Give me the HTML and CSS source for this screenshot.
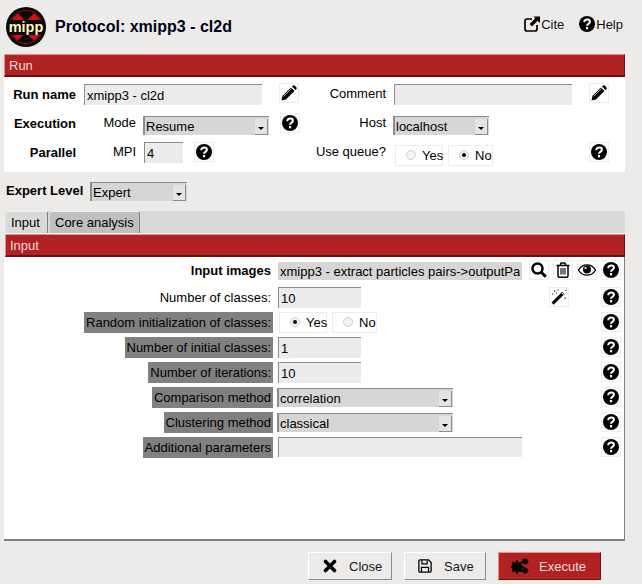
FILE: index.html
```html
<!DOCTYPE html>
<html lang="en">
<head>
<meta charset="UTF-8">
<meta name="viewport" content="width=device-width, initial-scale=1.0">
<title>Protocol: xmipp3 - cl2d</title>
<link rel="stylesheet" href="styles.css">
</head>
<body>
<svg class="defs" width="0" height="0">
  <symbol id="i-help" viewBox="0 0 16 16">
    <circle cx="8" cy="8" r="8" fill="#000"/>
    <path d="M5.2 6.2c0-1.7 1.3-2.7 2.9-2.7s2.8 1 2.8 2.3c0 2-2.9 2-2.9 3.9" fill="none" stroke="#fff" stroke-width="2"/>
    <rect x="7" y="11" width="2.1" height="2.3" fill="#fff"/>
  </symbol>
  <symbol id="i-pencil" viewBox="0 0 16 16">
    <path d="M0.5 15.5l.9-4.4L10 2.5l3.5 3.5-8.6 8.6z"/>
    <path d="M11 1.5l.8-.8c.6-.6 1.4-.6 2 0l1.5 1.5c.6.6.6 1.4 0 2l-.8.8z"/>
    <path d="M2.5 11.5l8-8" stroke="#fff" stroke-width=".7"/>
  </symbol>
  <symbol id="i-search" viewBox="0 0 16 16">
    <circle cx="6.5" cy="6.5" r="5" fill="none" stroke="#000" stroke-width="2.5"/>
    <path d="M10.2 10.2l4.6 4.6" stroke="#000" stroke-width="3"/>
  </symbol>
  <symbol id="i-trash" viewBox="0 0 16 16">
    <path d="M1.5 3.5h13M5.5 3.5V2c0-.6.4-1 1-1h3c.6 0 1 .4 1 1v1.5M3 3.5v10.2c0 .9.5 1.5 1.3 1.5h7.4c.8 0 1.3-.6 1.3-1.5V3.5" fill="none" stroke="#000" stroke-width="1.5"/>
    <path d="M6 6v6.5M8 6v6.5M10 6v6.5" stroke="#000" stroke-width="1.1"/>
  </symbol>
  <symbol id="i-eye" viewBox="0 0 18 12">
    <path d="M.5 6C2.5 2.6 5.5.8 9 .8s6.500 1.800 8.500 5.200C15.500 9.400 12.500 11.200 9 11.200S2.500 9.400.5 6z" fill="none" stroke="#000" stroke-width="1.300"/>
    <circle cx="9" cy="5.500" r="4"/>
    <circle cx="7.500" cy="4" r="1.100" fill="#fff"/>
  </symbol>
  <symbol id="i-wand" viewBox="0 0 16 16">
    <path d="M.5 13.500L11 3l2.200 2.200L2.700 15.700z"/>
    <path d="M10 4l1-1 2.200 2.200-1 1z" fill="#fff" stroke="#000" stroke-width=".6"/>
    <path d="M3 1.500h1.200v1.200H3zM6.500.5h1v1h-1zM1 4.500h1v1H1zM13.500 8.500h1.200v1.200h-1.200zM5 3.500h1v1H5zM14.500 1h1v1h-1z"/>
  </symbol>
  <symbol id="i-times" viewBox="0 0 14 14">
    <path d="M2.500 2.500l9 9M11.500 2.500l-9 9" stroke="#000" stroke-width="3.600" stroke-linecap="round"/>
  </symbol>
  <symbol id="i-save" viewBox="0 0 16 16">
    <path d="M1 2.200C1 1.500 1.500 1 2.200 1h9.800L15 4v9.800c0 .7-.5 1.200-1.200 1.200H2.200C1.500 15 1 14.500 1 13.800z" fill="none" stroke="#000" stroke-width="1.500"/>
    <path d="M4.500 1.500v4h6v-4M4 15V9.500h8V15" fill="none" stroke="#000" stroke-width="1.400"/>
  </symbol>
  <symbol id="i-gears" viewBox="0 0 18 16">
    <circle cx="6" cy="9" r="3.700" fill="none" stroke="#000" stroke-width="3"/>
    <path d="M6 2.500v13M-.5 9h13M1.400 4.400l9.200 9.200M10.600 4.400l-9.200 9.200" stroke="#000" stroke-width="2"/>
    <circle cx="14" cy="3.500" r="1.800" fill="none" stroke="#000" stroke-width="1.600"/>
    <path d="M14 0v7M10.500 3.500h7M11.700 1.200l4.600 4.600M16.300 1.200l-4.600 4.600" stroke="#000" stroke-width="1.100"/>
    <circle cx="14" cy="12.500" r="1.800" fill="none" stroke="#000" stroke-width="1.600"/>
    <path d="M14 9v7M10.500 12.500h7M11.700 10.200l4.600 4.600M16.300 10.200l-4.600 4.600" stroke="#000" stroke-width="1.100"/>
  </symbol>
  <symbol id="i-link" viewBox="0 0 16 16">
    <path d="M8 3H3C1.900 3 1 3.900 1 5v8c0 1.100.9 2 2 2h8c1.100 0 2-.9 2-2V9" fill="none" stroke="#000" stroke-width="1.700"/>
    <path d="M9.500 0.500H16V7l-2.300-2.300L8 10.400 5.600 8l5.700-5.700z"/>
  </symbol>
</svg>

<header class="top">
  <svg class="logo" viewBox="0 0 40 40" width="40" height="40">
    <circle cx="20" cy="20" r="20" fill="#0a0a0a"/>
    <path d="M9 9L31 31M31 9L9 31" stroke="#d40f14" stroke-width="8"/>
    <circle cx="20" cy="20" r="16.500" fill="none" stroke="#8a0b0e" stroke-width="1"/>
    <rect x="2" y="13" width="36" height="15" rx="6" fill="#0a0a0a"/>
    <text x="20" y="25" text-anchor="middle" class="logo-text">mipp</text>
  </svg>
  <h1 class="title">Protocol: xmipp3 - cl2d</h1>
  <a class="top-link cite"><svg class="ico-16"><use href="#i-link"/></svg>Cite</a>
  <a class="top-link help"><svg class="ico-16"><use href="#i-help"/></svg>Help</a>
</header>

<section class="section">
  <div class="section-head">Run</div>
  <div class="run-body">
    <div class="run-row">
      <div class="half">
        <label class="lbl-main">Run name</label>
        <input class="entry entry-run" type="text" value="xmipp3 - cl2d">
        <button class="ibtn ibtn-after"><svg class="ico"><use href="#i-pencil"/></svg></button>
      </div>
      <div class="half half-right">
        <label class="lbl-right">Comment</label>
        <input class="entry entry-run" type="text">
        <button class="ibtn ibtn-after"><svg class="ico"><use href="#i-pencil"/></svg></button>
      </div>
    </div>
    <div class="run-row">
      <div class="half">
        <label class="lbl-main">Execution</label>
        <label class="lbl-sub">Mode</label>
        <div class="combo combo-mode"><span class="combo-text">Resume</span><span class="combo-btn"></span></div>
        <button class="ibtn ibtn-near"><svg class="ico"><use href="#i-help"/></svg></button>
      </div>
      <div class="half half-right">
        <label class="lbl-right">Host</label>
        <div class="combo combo-host"><span class="combo-text">localhost</span><span class="combo-btn"></span></div>
      </div>
    </div>
    <div class="run-row">
      <div class="half">
        <label class="lbl-main">Parallel</label>
        <label class="lbl-sub">MPI</label>
        <input class="entry entry-mpi" type="text" value="4">
        <button class="ibtn ibtn-near"><svg class="ico"><use href="#i-help"/></svg></button>
      </div>
      <div class="half half-right">
        <label class="lbl-right">Use queue?</label>
        <div class="radios radios-queue">
          <span class="radio radio-yes"><i class="dot"></i>Yes</span>
          <span class="radio radio-no"><i class="dot on"></i>No</span>
        </div>
        <button class="ibtn ibtn-end"><svg class="ico"><use href="#i-help"/></svg></button>
      </div>
    </div>
  </div>
</section>

<div class="expert">
  <label class="expert-label">Expert Level</label>
  <div class="combo combo-expert"><span class="combo-text">Expert</span><span class="combo-btn"></span></div>
</div>

<div class="tabs">
  <span class="tab tab-on">Input</span>
  <span class="tab">Core analysis</span>
</div>

<section class="section section-input">
  <div class="section-head">Input</div>
  <div class="form-body">
    <div class="form-row form-row-first">
      <label class="form-label"><span class="form-text strong">Input images</span></label>
      <input class="entry entry-path" type="text" value="xmipp3 - extract particles pairs-&gt;outputParticles">
      <div class="actions">
        <button class="ibtn"><svg class="ico"><use href="#i-search"/></svg></button>
        <button class="ibtn"><svg class="ico"><use href="#i-trash"/></svg></button>
        <button class="ibtn"><svg class="ico-wide"><use href="#i-eye"/></svg></button>
        <button class="ibtn"><svg class="ico"><use href="#i-help"/></svg></button>
      </div>
    </div>
    <div class="form-row">
      <label class="form-label"><span class="form-text">Number of classes:</span></label>
      <input class="entry entry-num" type="text" value="10">
      <div class="actions">
        <button class="ibtn"><svg class="ico"><use href="#i-wand"/></svg></button>
        <span class="ibtn-gap"></span>
        <button class="ibtn"><svg class="ico"><use href="#i-help"/></svg></button>
      </div>
    </div>
    <div class="form-row">
      <label class="form-label"><span class="form-text expert-only">Random initialization of classes:</span></label>
      <div class="radios radios-form">
        <span class="radio radio-fyes"><i class="dot on"></i>Yes</span>
        <span class="radio radio-fno"><i class="dot"></i>No</span>
      </div>
      <div class="actions"><button class="ibtn"><svg class="ico"><use href="#i-help"/></svg></button></div>
    </div>
    <div class="form-row">
      <label class="form-label"><span class="form-text expert-only">Number of initial classes:</span></label>
      <input class="entry entry-num" type="text" value="1">
      <div class="actions"><button class="ibtn"><svg class="ico"><use href="#i-help"/></svg></button></div>
    </div>
    <div class="form-row">
      <label class="form-label"><span class="form-text expert-only">Number of iterations:</span></label>
      <input class="entry entry-num" type="text" value="10">
      <div class="actions"><button class="ibtn"><svg class="ico"><use href="#i-help"/></svg></button></div>
    </div>
    <div class="form-row">
      <label class="form-label"><span class="form-text expert-only">Comparison method</span></label>
      <div class="combo combo-form"><span class="combo-text">correlation</span><span class="combo-btn"></span></div>
      <div class="actions"><button class="ibtn"><svg class="ico"><use href="#i-help"/></svg></button></div>
    </div>
    <div class="form-row">
      <label class="form-label"><span class="form-text expert-only">Clustering method</span></label>
      <div class="combo combo-form"><span class="combo-text">classical</span><span class="combo-btn"></span></div>
      <div class="actions"><button class="ibtn"><svg class="ico"><use href="#i-help"/></svg></button></div>
    </div>
    <div class="form-row">
      <label class="form-label"><span class="form-text expert-only">Additional parameters</span></label>
      <input class="entry entry-path entry-blank" type="text">
      <div class="actions"><button class="ibtn"><svg class="ico"><use href="#i-help"/></svg></button></div>
    </div>
  </div>
</section>

<footer class="bottom">
  <button class="btn btn-close"><svg class="btn-ico"><use href="#i-times"/></svg>Close</button>
  <button class="btn btn-save"><svg class="btn-ico"><use href="#i-save"/></svg>Save</button>
  <button class="btn btn-run"><svg class="btn-ico-wide"><use href="#i-gears"/></svg>Execute</button>
</footer>
</body>
</html>
```

FILE: styles.css
```css
* {
  box-sizing: border-box;
}
body {
  margin: 0;
  width: 642px;
  height: 584px;
  overflow: hidden;
  background-color: #ecebe9;
  color: #000;
  font-family: "Liberation Sans", Arial, sans-serif;
  font-size: 13px;
}
.defs {
  display: block;
  height: 0;
}

/* header */
.top {
  display: flex;
  align-items: center;
  height: 54px;
  padding: 0 19px 0 6px;
}
.logo {
  flex: none;
  margin-top: -1px;
}
.logo-text {
  font-family: "Liberation Sans", sans-serif;
  font-weight: bold;
  font-size: 14.5px;
  fill: #fdfdb8;
}
.title {
  margin: 0 0 1px 9px;
  font-size: 16px;
  font-weight: bold;
  color: #00001a;
}
.top-link {
  display: flex;
  align-items: center;
  margin-bottom: 6px;
  color: #111;
}
.cite {
  margin-left: auto;
}
.help {
  margin-left: 15px;
}
.ico-16 {
  width: 16px;
  height: 16px;
  margin-right: 1px;
}

/* sections */
.section {
  margin-left: 4px;
  width: 621px;
}
.section-head {
  height: 23px;
  padding: 2px 4px 0;
  background-color: #b22222;
  border-top: 1px solid #f08c8c;
  border-left: 1px solid #f08c8c;
  border-right: 1px solid #6d1010;
  border-bottom: 2px solid #6d1010;
  color: #f6dede;
  line-height: 17px;
}
.run-body {
  height: 95px;
  padding-top: 3px;
  background-color: #fff;
}
.run-row {
  display: flex;
  height: 29px;
}
.half {
  display: flex;
  align-items: center;
  width: 310px;
}
.half-right {
  flex: 1;
  width: auto;
}
.lbl-main {
  width: 72px;
  text-align: right;
  font-weight: bold;
}
.lbl-sub,
.lbl-right {
  text-align: right;
  margin-top: -2px;
}
.lbl-sub {
  width: 60px;
}
.lbl-right {
  width: 72px;
}

/* fields */
.entry {
  height: 21px;
  padding: 0 2px;
  border: 0;
  border-top: 1px solid #8c8c8c;
  border-left: 1px solid #8c8c8c;
  border-radius: 0;
  background-color: #ecebe9;
  color: #000;
  font-family: inherit;
  font-size: 13px;
  outline: none;
}
.entry-run {
  width: 178px;
  margin-left: 8px;
}
.entry-mpi {
  width: 39px;
  margin-left: 8px;
}
.entry-num {
  width: 83px;
}
.entry-path {
  width: 244px;
  margin-top: 2px;
  height: 18px;
  background-color: #d6d6d6;
  border-top: 0;
  border-left: 0;
}
.entry-blank {
  height: 20px;
  margin-top: 0;
  background-color: #ecebe9;
  border-top: 1px solid #8c8c8c;
  border-left: 1px solid #8c8c8c;
}
.combo {
  display: flex;
  align-items: center;
  justify-content: space-between;
  height: 19px;
  background-color: #d6d6d6;
  border-top: 1px solid #8c8c8c;
  border-left: 1px solid #8c8c8c;
  box-shadow: 1px 0 0 #8c8c8c inset;
}
.combo-text {
  padding-left: 2px;
}
.combo-btn {
  position: relative;
  width: 13px;
  height: 16px;
  margin: 1px 1px 0 0;
  background-color: #e4e4e4;
  border-right: 1px solid #8c8c8c;
  border-bottom: 1px solid #8c8c8c;
}
.combo-btn::after {
  content: "";
  position: absolute;
  left: 3px;
  top: 8px;
  border-left: 3.5px solid transparent;
  border-right: 3.5px solid transparent;
  border-top: 3.5px solid #000;
}
.combo-mode {
  width: 126px;
  margin: 4px 0 0 7px;
}
.combo-host {
  width: 96px;
  margin: 4px 0 0 7px;
}
.combo-expert {
  width: 97px;
}
.combo-form {
  width: 176px;
  margin: 1px 0 0 -1px;
}

/* icon buttons */
.ibtn {
  flex: none;
  display: flex;
  align-items: center;
  justify-content: center;
  width: 20px;
  height: 20px;
  padding: 0;
  background-color: #fff;
  border: 1px solid #ececec;
}
.ibtn-after {
  margin: -3px 0 0 17px;
}
.ibtn-near {
  margin: -1px 0 0 11px;
}
.ibtn-end {
  margin: -1px 16px 0 auto;
}
.ibtn-gap {
  flex: none;
  width: 24px;
}
.ico {
  width: 16px;
  height: 16px;
}
.ico-wide {
  width: 18px;
  height: 12px;
}

/* radios */
.radios {
  display: flex;
  gap: 5px;
}
.radios-queue {
  margin: 6px 0 0 9px;
}
.radio {
  display: flex;
  align-items: center;
  height: 21px;
  padding-left: 10px;
  background-color: #fff;
  border: 1px solid #ececec;
}
.radio-yes {
  width: 48px;
}
.radio-no {
  width: 45px;
}
.radio-fyes {
  width: 48px;
}
.radio-fno {
  width: 45px;
}
.dot {
  position: relative;
  flex: none;
  width: 10px;
  height: 10px;
  margin-right: 6px;
  margin-top: -1px;
  border-radius: 50%;
  background-color: #f4f4f4;
  border: 1px solid #cfcfcf;
}
.dot.on::after {
  content: "";
  position: absolute;
  left: 2px;
  top: 2px;
  width: 4px;
  height: 4px;
  border-radius: 50%;
  background-color: #000;
}

/* expert level */
.expert {
  display: flex;
  align-items: center;
  height: 39px;
  padding-left: 6px;
}
.expert-label {
  width: 84px;
  font-weight: bold;
  margin-top: -3px;
}

/* tabs */
.tabs {
  display: flex;
  gap: 2px;
  width: 621px;
  height: 23px;
  margin-left: 4px;
  background-color: #d9d9d9;
  border-bottom: 1px solid #fff;
}
.tab {
  padding: 3px 5px 0;
  height: 22px;
  background-color: #bfbfbf;
  border-radius: 3px 3px 0 0;
  border-top: 1px solid #f2f2f2;
  border-right: 1px solid #808080;
}
.tab-on {
  width: 44px;
  padding-left: 6px;
  background-color: #d9d9d9;
  border-left: 1px solid #f2f2f2;
}

/* input form */
.section-input .section-head {
  margin-left: 1px;
  width: 620px;
}
.form-body {
  height: 284px;
  padding-top: 1px;
  background-color: #fff;
  border-right: 1px solid #808080;
  border-bottom: 2px solid #808080;
}
.form-row {
  display: flex;
  align-items: flex-start;
  height: 25px;
  padding-top: 2px;
  padding-right: 3px;
}
.form-row-first {
  height: 27px;
}
.form-label {
  display: flex;
  justify-content: flex-end;
  width: 269px;
  margin-right: 5px;
}
.form-text {
  height: 21px;
  padding: 0 2px;
  line-height: 21px;
}
.strong {
  font-weight: bold;
  padding-top: 0;
}
.expert-only {
  background-color: #808080;
  color: #000;
}
.radios-form {
  margin-left: 1px;
}
.actions {
  display: flex;
  gap: 4px;
  margin-left: auto;
}

/* bottom buttons */
.bottom {
  display: flex;
  justify-content: flex-end;
  gap: 12px;
  padding-right: 41px;
  margin-top: 11px;
}
.btn {
  display: flex;
  align-items: center;
  height: 28px;
  padding: 0;
  background-color: #ecebe9;
  border: 1px solid #fff;
  border-right-color: #8c8c8c;
  border-bottom-color: #8c8c8c;
  color: #1a1a1a;
  font-family: inherit;
  font-size: 13px;
}
.btn-ico {
  width: 14px;
  height: 14px;
}
.btn-ico-wide {
  width: 18px;
  height: 16px;
}
.btn-close {
  width: 84px;
  padding-left: 14px;
}
.btn-close .btn-ico {
  margin-right: 12px;
}
.btn-save {
  width: 82px;
  padding-left: 13px;
}
.btn-save .btn-ico {
  margin-right: 12px;
}
.btn-run {
  width: 103px;
  padding-left: 12px;
  background-color: #b22222;
  border-color: #f08c8c #6d1010 #6d1010 #f08c8c;
  color: #f6dede;
}
.btn-run .btn-ico-wide {
  margin-right: 10px;
}
```
